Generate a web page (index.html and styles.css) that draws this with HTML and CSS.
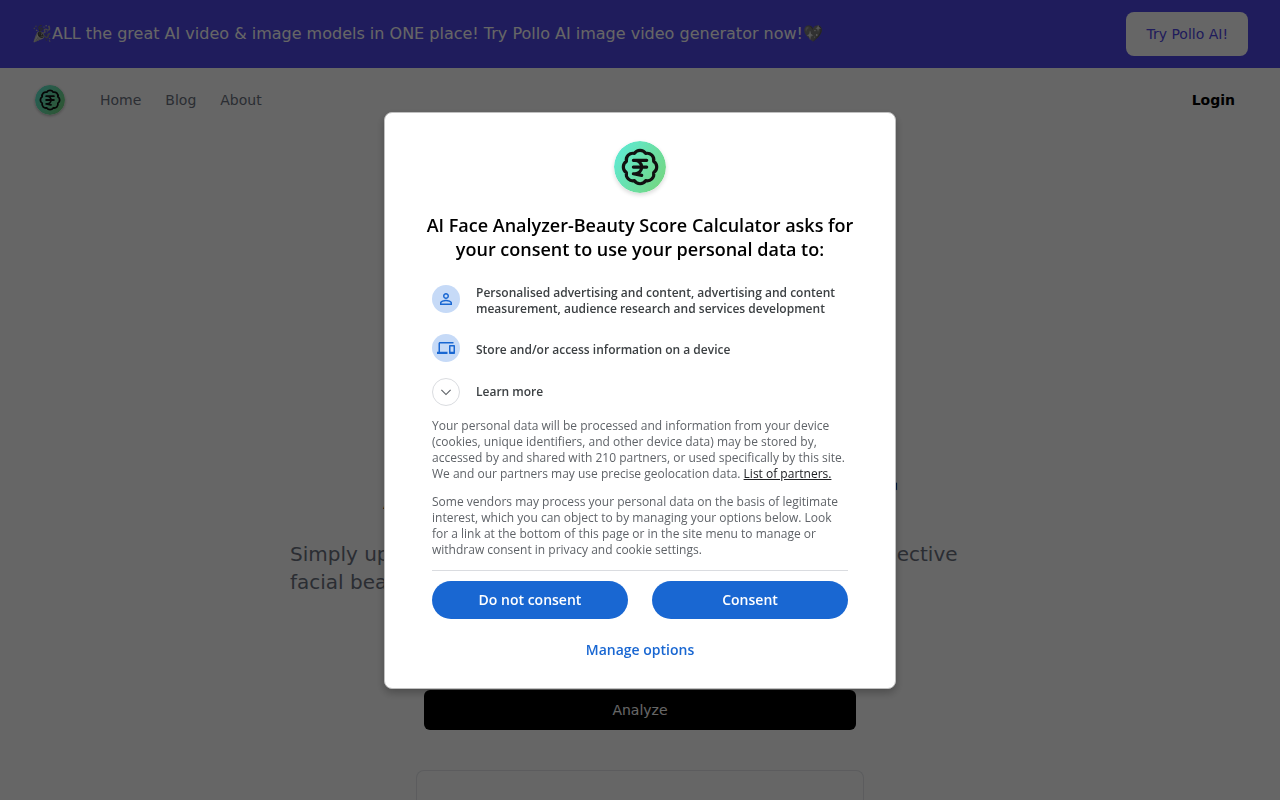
FILE: index.html
```
<!DOCTYPE html>
<html lang="en">

<head>
    <meta charset="utf-8">
    <meta name="viewport" content="width=device-width, initial-scale=1">
    <title>AI Face Analyzer-Beauty Score Calculator</title>
    <link rel="stylesheet" href="styles.css">
</head>

<body>
    <svg width="0" height="0" class="sprite" aria-hidden="true">
        <defs>
            <linearGradient id="logo-fill" x1="0" y1="0.2" x2="1" y2="0.8">
                <stop offset="0" stop-color="#5eead4" />
                <stop offset="1" stop-color="#74d680" />
            </linearGradient>
        </defs>
        <symbol id="logo" viewBox="0 0 52 52">
            <circle cx="26" cy="26" r="26" fill="url(#logo-fill)" />
            <g transform="translate(6 6) scale(1.67)" fill="none" stroke="#111" stroke-width="1.9" stroke-linecap="round" stroke-linejoin="round">
                <path d="M3.85 8.62a4 4 0 0 1 4.78-4.77 4 4 0 0 1 6.74 0 4 4 0 0 1 4.78 4.78 4 4 0 0 1 0 6.74 4 4 0 0 1-4.77 4.78 4 4 0 0 1-6.75 0 4 4 0 0 1-4.78-4.77 4 4 0 0 1 0-6.76Z" />
                <path d="M8 8h8M8 12h8M13 17l-5-1h1a4 4 0 0 0 0-8" />
            </g>
        </symbol>
    </svg>

    <div class="banner">
        <p><span class="emoji">🎉</span>ALL the great AI video &amp; image models in ONE place! Try Pollo AI image video generator now!<span class="emoji">💖</span></p>
        <a class="banner-link" href="#">Try Pollo AI!</a>
    </div>

    <header class="navbar">
        <a class="brand" href="#" aria-label="Home page"><svg class="logo-small"><use href="#logo" /></svg></a>
        <nav>
            <a href="#">Home</a>
            <a href="#">Blog</a>
            <a href="#">About</a>
        </nav>
        <a class="login" href="#">Login</a>
    </header>

    <main class="hero">
        <h1>AI Beauty Analyzer</h1>
        <p>Simply upload your photo and let our smart AI deliver an objective facial beauty score.</p>
        <button class="button-analyze" type="button">Analyze</button>
        <div class="result"></div>
    </main>

    <div class="overlay">
        <div class="dialog" role="dialog" aria-modal="true" aria-labelledby="dialog-title">
            <svg class="logo-large"><use href="#logo" /></svg>
            <h2 id="dialog-title">AI Face Analyzer-Beauty Score Calculator asks for your consent to use your personal data to:</h2>
            <ul class="purposes">
                <li>
                    <span class="icon">
                        <svg viewBox="0 0 24 24"><path d="M12 5.9a2.1 2.1 0 1 1 0 4.2 2.1 2.1 0 0 1 0-4.2m0 9c2.97 0 6.1 1.46 6.1 2.1v1.1H5.9V17c0-.64 3.13-2.1 6.1-2.1M12 4C9.79 4 8 5.79 8 8s1.79 4 4 4 4-1.79 4-4-1.79-4-4-4zm0 9c-2.67 0-8 1.34-8 4v3h16v-3c0-2.66-5.33-4-8-4z" /></svg>
                    </span>
                    <span>Personalised advertising and content, advertising and content measurement, audience research and services development</span>
                </li>
                <li>
                    <span class="icon">
                        <svg viewBox="0 0 24 24"><path d="M4 6h18V4H4c-1.1 0-2 .9-2 2v11H0v3h14v-3H4V6zm19 2h-6c-.55 0-1 .45-1 1v10c0 .55.45 1 1 1h6c.55 0 1-.45 1-1V9c0-.55-.45-1-1-1zm-1 9h-4v-7h4v7z" /></svg>
                    </span>
                    <span>Store and/or access information on a device</span>
                </li>
            </ul>
            <button class="learn-more" type="button">
                <span class="icon icon-outline">
                    <svg viewBox="0 0 24 24"><path d="M17.6 8.6 12 14.2 6.4 8.6 5.3 9.7l6.7 6.7 6.7-6.7z" /></svg>
                </span>
                <span>Learn more</span>
            </button>
            <div class="details">
                <p>Your personal data will be processed and information from your device (cookies, unique identifiers, and other device data) may be stored by, accessed by and shared with 210 partners, or used specifically by this site. We and our partners may use precise geolocation data. <a href="#">List of partners.</a></p>
                <p>Some vendors may process your personal data on the basis of legitimate interest, which you can object to by managing your options below. Look for a link at the bottom of this page or in the site menu to manage or withdraw consent in privacy and cookie settings.</p>
            </div>
            <div class="choices">
                <button class="button-choice" type="button">Do not consent</button>
                <button class="button-choice" type="button">Consent</button>
            </div>
            <button class="button-manage" type="button">Manage options</button>
        </div>
    </div>
</body>

</html>
```
FILE: styles.css
```
* {
    box-sizing: border-box;
}

body {
    display: flex;
    flex-direction: column;
    margin: 0;
    height: 100vh;
    overflow: hidden;
    font-family: "DejaVu Sans", sans-serif;
    font-size: 14px;
    line-height: 20px;
    background-color: #fff;
}

h1,
h2,
p,
ul {
    margin: 0;
    padding: 0;
}

a {
    color: inherit;
    text-decoration: none;
}

button {
    border: none;
    font: inherit;
    cursor: pointer;
}

.sprite {
    position: absolute;
}

/* page */
.banner {
    display: flex;
    align-items: center;
    justify-content: space-between;
    padding: 12px 32px;
    background-color: #4f46e5;
    color: #fff;
    font-size: 16px;
    line-height: 24px;
}

.emoji {
    filter: grayscale(1);
}

.banner-link {
    padding: 12px 20px;
    border-radius: 8px;
    background-color: #fff;
    color: #4f46e5;
    font-size: 14px;
    line-height: 20px;
}

.navbar {
    display: flex;
    align-items: center;
    gap: 32px;
    height: 64px;
    padding: 0 45px 0 32px;
}

.navbar nav {
    display: flex;
    flex: 1;
    gap: 24px;
    color: #6b7280;
}

.brand {
    display: flex;
    padding: 0 3px;
}

.logo-small {
    width: 30px;
    height: 30px;
    border-radius: 50%;
    box-shadow: 0 1px 3px rgba(0, 0, 0, 0.3);
}

.login {
    color: #000;
    font-weight: bold;
}

.hero {
    display: flex;
    flex: 1;
    flex-direction: column;
    align-items: center;
    width: 100%;
    max-width: 700px;
    margin: 0 auto;
    padding-top: 336px;
}

.hero h1 {
    font-size: 48px;
    line-height: 48px;
}

.hero p {
    margin-top: 24px;
    color: #6b7280;
    font-size: 20px;
    line-height: 28px;
}

.button-analyze {
    width: 432px;
    height: 40px;
    flex: none;
    margin-top: 94px;
    border-radius: 6px;
    background-color: #000;
    color: #fff;
}

.result {
    flex: 1;
    width: 448px;
    margin-top: 40px;
    border: 1px solid #e5e7eb;
    border-bottom: none;
    border-radius: 8px 8px 0 0;
}

/* consent dialog */
.overlay {
    position: fixed;
    inset: 0;
    display: flex;
    align-items: center;
    justify-content: center;
    padding-top: 1px;
    background-color: rgba(0, 0, 0, 0.6);
    font-family: "Open Sans", sans-serif;
}

.dialog {
    display: flex;
    flex-direction: column;
    width: 512px;
    padding: 28px 47px 19px;
    border: 1px solid #c0c0c0;
    border-radius: 8px;
    background-color: #fff;
    box-shadow: 0 4px 8px rgba(0, 0, 0, 0.25);
}

.logo-large {
    align-self: center;
    width: 52px;
    height: 52px;
    border-radius: 50%;
    box-shadow: 0 2px 4px rgba(0, 0, 0, 0.15);
}

.dialog h2 {
    margin: 20px -8px 0;
    color: #000;
    font-size: 18px;
    font-weight: 600;
    line-height: 24px;
    text-align: center;
}

.purposes {
    display: flex;
    flex-direction: column;
    gap: 17px;
    margin-top: 24px;
    list-style: none;
}

.purposes li,
.learn-more {
    display: flex;
    align-items: center;
    gap: 16px;
    color: #3c4043;
    font-size: 12px;
    font-weight: 600;
    line-height: 16px;
}

.purposes li {
    min-height: 32px;
}

.purposes .icon {
    align-self: flex-start;
}

.learn-more {
    margin-top: 12px;
    padding: 0;
    background: none;
    text-align: left;
}

.icon {
    display: flex;
    flex: none;
    align-items: center;
    justify-content: center;
    width: 28px;
    height: 28px;
    border-radius: 50%;
    background-color: #c6daf7;
    fill: #1967d2;
}

.icon svg {
    width: 18px;
    height: 18px;
}

.icon-outline {
    border: 1px solid #dadce0;
    background-color: #fff;
    fill: #5f6368;
}

.details {
    display: flex;
    flex-direction: column;
    gap: 12px;
    margin-top: 12px;
    padding-bottom: 12px;
    border-bottom: 1px solid #dadce0;
    color: #5f6368;
    font-size: 12px;
    line-height: 16px;
}

.details a {
    color: #202124;
    text-decoration: underline;
}

.choices {
    display: flex;
    gap: 24px;
    margin-top: 10px;
}

.button-choice {
    flex: 1;
    height: 38px;
    border-radius: 19px;
    background-color: #1967d2;
    color: #fff;
    font-size: 14px;
    font-weight: 600;
}

.button-manage {
    height: 38px;
    margin-top: 12px;
    background: none;
    color: #1967d2;
    font-size: 14px;
    font-weight: 600;
}
```
